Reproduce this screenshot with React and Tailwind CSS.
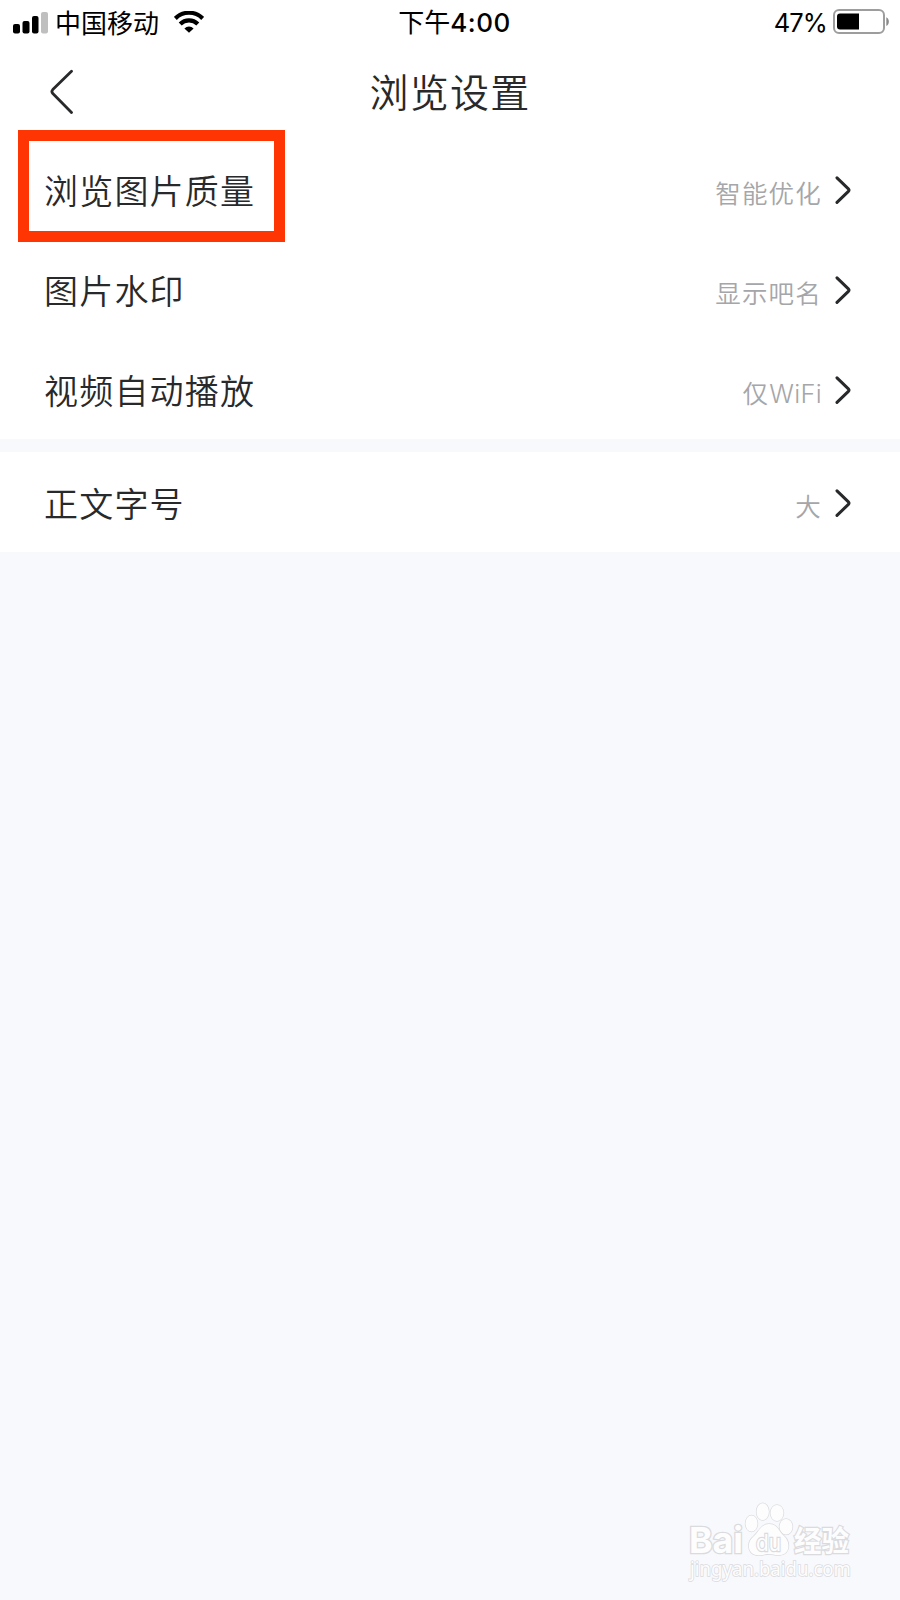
import React from 'react'

const SECTIONS = [
  [
    { label: '浏览图片质量', value: '智能优化', marked: true },
    { label: '图片水印', value: '显示吧名' },
    { label: '视频自动播放', value: '仅WiFi' },
  ],
  [{ label: '正文字号', value: '大' }],
]

function Signal() {
  return (
    <svg width="36" height="22" viewBox="0 0 36 22">
      <rect x="0" y="12" width="7" height="9.5" rx="2" />
      <rect x="9.5" y="9" width="7" height="12.5" rx="2" />
      <rect x="19" y="4" width="6.5" height="17.5" rx="2" />
      <rect x="28" y="0" width="7" height="21.5" rx="2" fill="#bfbfbf" />
    </svg>
  )
}

function Wifi() {
  return (
    <svg width="30" height="22" viewBox="0 0 30 22" fill="none" stroke="#000" strokeWidth="4.2">
      <path d="M1.3 7.4a19.4 19.4 0 0 1 27.4 0" />
      <path d="M6.2 13a12.4 12.4 0 0 1 17.6 0" />
      <path d="M15 21.8l-4.6-4.4a6.5 6.5 0 0 1 9.2 0z" fill="#000" stroke="none" />
    </svg>
  )
}

function Battery() {
  return (
    <svg className="-mt-px" width="58" height="26" viewBox="0 0 58 26">
      <rect x="1" y="1" width="50" height="23" rx="5" fill="none" stroke="#9d9d9d" strokeWidth="2" />
      <path d="M7 4.5h19v16H7a3 3 0 0 1-3-3v-10a3 3 0 0 1 3-3z" />
      <path d="M53.3 8.3c3.4 1.4 3.4 7.4 0 8.8z" fill="#8a8a8a" />
    </svg>
  )
}

function StatusBar() {
  return (
    <div className="flex h-[45px] items-center pl-[13px] pr-[9px] text-black">
      <div className="flex flex-1 items-center">
        <Signal />
        <span className="ml-[6px] mt-[2px] text-[26px] leading-none">中国移动</span>
        <span className="-mt-px ml-[15px]"><Wifi /></span>
      </div>
      <div className="ml-[5px] mt-px text-[26px] leading-none">下午<span className="font-[550] tracking-[0.5px]">4:00</span></div>
      <div className="flex flex-1 items-center justify-end">
        <span className="mr-[6px] mt-px text-[25.5px] leading-none tracking-[-0.9px]">47%</span>
        <Battery />
      </div>
    </div>
  )
}

function NavBar() {
  return (
    <div className="grid h-[94px] grid-cols-[100px_1fr_100px] items-center text-[#28292b]">
      <svg className="ml-[50px]" width="24" height="46" viewBox="0 0 24 46" fill="none" stroke="currentColor" strokeWidth="2.8" strokeLinecap="round" strokeLinejoin="round">
        <path d="M21.5 2.3L2.8 20.6q-1.8 2 0 4L21.5 43.6" />
      </svg>
      <h1 className="text-center text-[39px] font-[350] leading-none tracking-[1.2px]">浏览设置</h1>
    </div>
  )
}

function Row({ label, value, marked }) {
  return (
    <div className="relative flex h-[100px] items-center pl-[44px] pr-[49.5px]">
      {marked && <div className="absolute -top-[9px] left-[18px] h-[112px] w-[267px] border-[11px] border-[#ff3604]" />}
      <span className="mt-[6px] flex-1 text-[34px] font-[350] leading-none tracking-[1.2px] text-[#28292b]">{label}</span>
      <span className="mr-[12.5px] mt-[10px] text-[25.5px] font-[350] leading-none tracking-[1.2px] text-[#a5a6a9]">
        {value.replace('WiFi', '')}
        {value.includes('WiFi') && <span className="text-[25.5px] tracking-[0.3px]">WiFi</span>}
      </span>
      <svg className="mt-px" width="16" height="28" viewBox="0 0 16 28" fill="none" stroke="#28292b" strokeWidth="3" strokeLinecap="round" strokeLinejoin="round">
        <path d="M2 1.8L13.4 12.8q1.3 1.3 0 2.6L2 26.4" />
      </svg>
    </div>
  )
}

function Watermark() {
  return (
    <svg className="absolute bottom-0 left-[680px]" width="190" height="106" viewBox="-6 -6 190 106" fill="#fdfdfe" stroke="#dadbde" strokeWidth="1.4" paintOrder="stroke">
      <text x="3" y="53" fontSize="36" fontWeight="700" textLength="54" lengthAdjust="spacingAndGlyphs" strokeWidth="2.6">Bai</text>
      <ellipse cx="65.5" cy="23.5" rx="6" ry="8" />
      <ellipse cx="76.7" cy="11.7" rx="6.2" ry="8.5" />
      <ellipse cx="91" cy="13" rx="6.5" ry="8" />
      <ellipse cx="100" cy="26.7" rx="6.5" ry="7.8" />
      <path d="M83 24c9 0 10 8 15 12 6 5 7 18-4 19-5 .5-7-1-11-1s-8 2-13 1c-9-2-9-13-3-18 6-5 8-13 16-13z" />
      <text x="70" y="50.5" fontSize="23" textLength="25" lengthAdjust="spacingAndGlyphs" strokeWidth="2.4">du</text>
      <text x="108" y="51.5" fontSize="29" fontWeight="700" textLength="55" lengthAdjust="spacingAndGlyphs" strokeWidth="2.4">经验</text>
      <text x="4" y="75.5" fontSize="20" textLength="161" lengthAdjust="spacingAndGlyphs" strokeWidth="1.6" fontFamily="Noto Sans">jingyan.baidu.com</text>
    </svg>
  )
}

export default function App() {
  return (
    <div className="relative h-[1600px] w-[900px] overflow-hidden bg-[#f8f9fc] font-['Inter','Noto_Sans_CJK_SC',sans-serif]">
      <header className="bg-white">
        <StatusBar />
        <NavBar />
      </header>
      <main className="flex flex-col gap-[13px]">
        {SECTIONS.map((rows, i) => (
          <section key={i} className="bg-white">
            {rows.map((r) => <Row key={r.label} {...r} />)}
          </section>
        ))}
      </main>
      <Watermark />
    </div>
  )
}
